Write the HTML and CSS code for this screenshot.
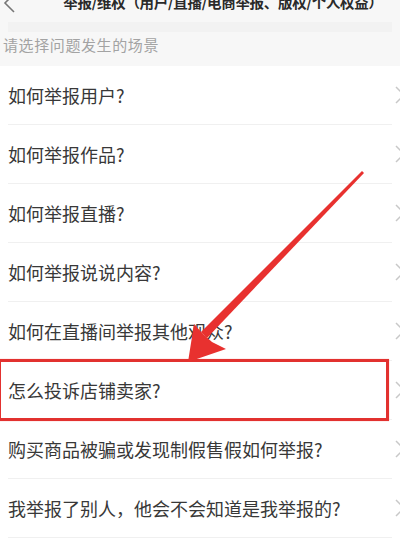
FILE: index.html
```html
<!DOCTYPE html>
<html lang="zh-CN">
<head>
  <meta charset="UTF-8" />
  <meta name="viewport" content="width=device-width, initial-scale=1.0" />
  <title>举报/维权</title>
  <link rel="stylesheet" href="styles.css">
</head>
<body>

  <div class="top-bar">
    <svg class="back-icon" width="16" height="24" viewBox="0 0 16 24">
      <path d="M12 -6 L3 3 L12 12" fill="none" stroke="#777" stroke-width="1.6" />
    </svg>
    <h1 class="page-title">举报/维权（用户/直播/电商举报、版权/个人权益）</h1>
  </div>

  <div class="section">
    <div class="section-strip"></div>
    <p class="section-label">请选择问题发生的场景</p>
  </div>

  <ul class="question-list">
    <li class="question">
      <span>如何举报用户?</span>
      <svg class="chevron" width="12" height="20" viewBox="0 0 12 20"><path d="M2 2 L10 10 L2 18" fill="none" stroke="#c8c8c8" stroke-width="1.5" /></svg>
    </li>
    <li class="question">
      <span>如何举报作品?</span>
      <svg class="chevron" width="12" height="20" viewBox="0 0 12 20"><path d="M2 2 L10 10 L2 18" fill="none" stroke="#c8c8c8" stroke-width="1.5" /></svg>
    </li>
    <li class="question">
      <span>如何举报直播?</span>
      <svg class="chevron" width="12" height="20" viewBox="0 0 12 20"><path d="M2 2 L10 10 L2 18" fill="none" stroke="#c8c8c8" stroke-width="1.5" /></svg>
    </li>
    <li class="question">
      <span>如何举报说说内容?</span>
      <svg class="chevron" width="12" height="20" viewBox="0 0 12 20"><path d="M2 2 L10 10 L2 18" fill="none" stroke="#c8c8c8" stroke-width="1.5" /></svg>
    </li>
    <li class="question">
      <span>如何在直播间举报其他观众?</span>
      <svg class="chevron" width="12" height="20" viewBox="0 0 12 20"><path d="M2 2 L10 10 L2 18" fill="none" stroke="#c8c8c8" stroke-width="1.5" /></svg>
    </li>
    <li class="question marked">
      <span>怎么投诉店铺卖家?</span>
      <svg class="chevron" width="12" height="20" viewBox="0 0 12 20"><path d="M2 2 L10 10 L2 18" fill="none" stroke="#c8c8c8" stroke-width="1.5" /></svg>
    </li>
    <li class="question">
      <span>购买商品被骗或发现制假售假如何举报?</span>
      <svg class="chevron" width="12" height="20" viewBox="0 0 12 20"><path d="M2 2 L10 10 L2 18" fill="none" stroke="#c8c8c8" stroke-width="1.5" /></svg>
    </li>
    <li class="question">
      <span>我举报了别人，他会不会知道是我举报的?</span>
      <svg class="chevron" width="12" height="20" viewBox="0 0 12 20"><path d="M2 2 L10 10 L2 18" fill="none" stroke="#c8c8c8" stroke-width="1.5" /></svg>
    </li>
  </ul>

  <!-- red pointer drawn over the list -->
  <svg class="pointer" width="400" height="556" viewBox="0 0 400 556">
    <polygon points="362,171 364,173 207,338 201,332" fill="#e8312f" />
    <polygon points="188,362 194,324 203,334 212,342 226,349" fill="#e8312f" />
  </svg>

</body>
</html>
```

FILE: styles.css
```css
body {
  font-family: "Noto Sans CJK SC", "Noto Sans", sans-serif;
  margin: 0;
  padding: 0;
  background-color: #ffffff;
  color: #383838;
  width: 400px;
  height: 556px;
  overflow: hidden;
  position: relative;
}

.top-bar {
  display: flex;
  align-items: flex-start;
  height: 22px;
  background-color: #f7f7f7;
  overflow: hidden;
}

.back-icon {
  flex-shrink: 0;
  margin-left: 2px;
}

.page-title {
  flex: 1;
  margin: -9px 0 0 0;
  padding-left: 28px;
  font-size: 14.5px;
  font-weight: bold;
  line-height: 22px;
  color: #2a2a2a;
  text-align: center;
  white-space: nowrap;
  letter-spacing: -0.3px;
}

.section {
  background-color: #f7f7f7;
  height: 44px;
}

.section-strip {
  height: 10px;
  margin: 0 8px;
  background-color: #f2f2f2;
}

.section-label {
  margin: 0;
  padding: 2px 0 0 3px;
  font-size: 15px;
  line-height: 22px;
  color: #a3a3a3;
  letter-spacing: 0.6px;
}

.question-list {
  list-style: none;
  margin: 0;
  padding: 0;
}

.question {
  display: flex;
  align-items: center;
  justify-content: space-between;
  height: 58px;
  margin: 0 8px;
  border-bottom: 1px solid #f0f0f0;
  font-size: 18px;
  position: relative;
}

.chevron {
  margin-right: -14px;
  flex-shrink: 0;
}

.marked::before {
  content: "";
  position: absolute;
  left: -10px;
  right: 3px;
  top: -2px;
  bottom: -2px;
  border: 3px solid #e2312f;
  box-shadow: 0 0 1px #f5a0a0;
}

.pointer {
  position: absolute;
  top: 0;
  left: 0;
  pointer-events: none;
}
```
